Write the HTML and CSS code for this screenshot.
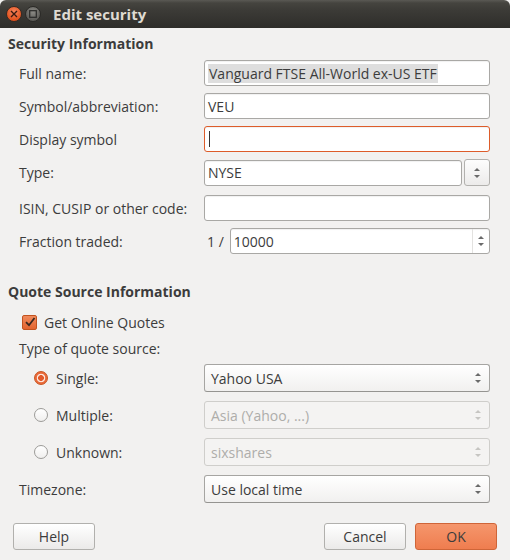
FILE: index.html
```html
<!DOCTYPE html>
<html>
<head>
<meta charset="utf-8">
<link rel="stylesheet" href="styles.css">
</head>
<body>
<div class="window">
  <div class="titlebar">
    <span class="wbtn close"><svg width="8" height="8" viewBox="0 0 8 8"><path d="M1 1L7 7M7 1L1 7" stroke="#3a1a10" stroke-width="1.4"/></svg></span>
    <span class="wbtn max"><svg width="8" height="8" viewBox="0 0 8 8"><rect x="0.7" y="0.7" width="6.6" height="6.6" fill="none" stroke="#2a2a28" stroke-width="1.2"/></svg></span>
    <span class="title">Edit security</span>
  </div>
  <div class="content">
    <div class="section-title">Security Information</div>
    <div class="form">
      <label class="lbl">Full name:</label>
      <div class="entry"><span class="sel">Vanguard FTSE All-World ex-US ETF</span></div>
      <label class="lbl">Symbol/abbreviation:</label>
      <div class="entry">VEU</div>
      <label class="lbl">Display symbol</label>
      <div class="entry focus"><span class="caret"></span></div>
      <label class="lbl">Type:</label>
      <div class="typerow">
        <div class="entry grow">NYSE</div>
        <div class="spinbtn"><span class="arrows"><i class="up"></i><i class="down"></i></span></div>
      </div>
      <label class="lbl r5">ISIN, CUSIP or other code:</label>
      <div class="entry r5"></div>
      <label class="lbl">Fraction traded:</label>
      <div class="fracrow">
        <span class="frac">1 /</span>
        <div class="entry grow spin">10000<span class="arrows"><i class="up"></i><i class="down"></i></span></div>
      </div>
    </div>

    <div class="section-title second">Quote Source Information</div>
    <div class="check-row"><span class="checkbox"><svg width="12" height="12" viewBox="0 0 12 12"><path d="M2 6.2L5 9.2L10.5 2" fill="none" stroke="#3a2820" stroke-width="1.8"/></svg></span>Get Online Quotes</div>
    <div class="plain-lbl">Type of quote source:</div>
    <div class="qform">
      <label class="radio-lbl"><span class="radio on"><i></i></span>Single:</label>
      <div class="combo">Yahoo USA<span class="arrows"><i class="up"></i><i class="down"></i></span></div>
      <label class="radio-lbl"><span class="radio"></span>Multiple:</label>
      <div class="combo disabled">Asia (Yahoo, ...)<span class="arrows"><i class="up"></i><i class="down"></i></span></div>
      <label class="radio-lbl"><span class="radio"></span>Unknown:</label>
      <div class="combo disabled">sixshares<span class="arrows"><i class="up"></i><i class="down"></i></span></div>
      <label class="tz-lbl">Timezone:</label>
      <div class="combo">Use local time<span class="arrows"><i class="up"></i><i class="down"></i></span></div>
    </div>
    <div class="buttons">
      <button class="btn">Help</button>
      <span class="spacer"></span>
      <button class="btn">Cancel</button>
      <button class="btn ok">OK</button>
    </div>
  </div>
</div>
</body>
</html>
```
FILE: styles.css
```css
* { box-sizing: border-box; }
html, body { margin: 0; padding: 0; }
body {
  width: 510px; height: 560px; overflow: hidden;
  background: #f2f1f0;
  font-family: "Open Sans", "Noto Sans", sans-serif;
  font-size: 14px;
  color: #3c3c3c;
}
.window { width: 510px; height: 560px; }
.titlebar {
  height: 28px;
  background: linear-gradient(#5a5954 0px, #45443f 3px, #3c3b37 10px, #2e2d2a 28px);
  border-radius: 6px 6px 0 0;
  display: flex; align-items: center;
  padding-left: 6px;
}
.wbtn {
  width: 16px; height: 16px; border-radius: 50%;
  display: flex; align-items: center; justify-content: center;
  margin-right: 3px;
}
.wbtn.close {
  background: radial-gradient(circle at 50% 35%, #f8845c, #e3531f 70%);
  border: 1px solid #3a2a22;
}
.wbtn.max {
  width: 16px; height: 16px;
  background: radial-gradient(circle at 50% 35%, #8c8b86, #5d5c58 70%);
  border: 1px solid #2b2a27;
}
.title {
  color: #dfdbd2; font-weight: bold; font-size: 15px;
  margin-left: 9px;
}
.content { padding: 7px 20px 0 8px; }
.section-title { font-weight: bold; height: 18px; line-height: 18px; font-size: 14px; }
.section-title.second { margin-top: 29px; }
.form {
  display: grid;
  grid-template-columns: 185px 1fr;
  row-gap: 7px;
  margin-top: 7px;
  padding-left: 11px;
}
.lbl { display: flex; align-items: center; height: 26px; }
.r5 { margin-top: 2px; }
.entry {
  height: 26px;
  border: 1px solid #a9a8a5;
  border-radius: 3px;
  background: #fff;
  box-shadow: inset 0 1px 1px rgba(0,0,0,0.06);
  display: flex; align-items: center;
  padding-left: 3px;
  position: relative;
}
.entry .sel { background: #dedede; padding: 0 1px; }
.entry.focus { border-color: #dd5c2a; }
.caret { width: 1px; height: 16px; background: #333; margin-left: 1px; }
.typerow, .fracrow { display: flex; align-items: center; gap: 2px; }
.grow { flex: 1; }
.spinbtn {
  width: 26px; height: 27px;
  border: 1px solid #b2b1ae; border-radius: 3px;
  background: linear-gradient(#fdfdfd, #ecebea);
  display: flex; align-items: center; justify-content: center;
}
.arrows { display: flex; flex-direction: column; align-items: center; gap: 4px; }
.arrows i { width: 0; height: 0; border-left: 3px solid transparent; border-right: 3px solid transparent; }
.arrows i.up { border-bottom: 3px solid #6a6a6a; }
.arrows i.down { border-top: 3px solid #6a6a6a; }
.frac { margin-left: 3px; margin-right: 4px; }
.entry.spin { padding-right: 0; }
.entry.spin .arrows {
  position: absolute; right: 0; top: 0; bottom: 0; width: 17px;
  justify-content: center;
  border-left: 1px solid #e3e2e0;
}
.check-row { display: flex; align-items: center; margin-top: 12px; padding-left: 14px; height: 18px; }
.checkbox {
  width: 15px; height: 15px; border-radius: 2px;
  background: linear-gradient(#f08a5c, #e3642f);
  border: 1px solid #c2531f;
  display: flex; align-items: center; justify-content: center;
  margin-right: 7px;
}
.plain-lbl { padding-left: 11px; margin-top: 9px; height: 18px; line-height: 18px; }
.qform {
  display: grid;
  grid-template-columns: 185px 1fr;
  row-gap: 9px;
  margin-top: 6px;
  padding-left: 11px;
}
.radio-lbl { display: flex; align-items: center; padding-left: 15px; height: 28px; }
.tz-lbl { display: flex; align-items: center; height: 28px; }
.radio {
  width: 14px; height: 14px; border-radius: 50%;
  border: 1px solid #9c9b98;
  background: linear-gradient(#ffffff, #f0efee);
  margin-right: 8px;
  display: flex; align-items: center; justify-content: center;
}
.radio.on {
  background: radial-gradient(circle, #e2592a 0 2.6px, #fbe6dc 3.2px 4px, #ea6a3a 4.6px);
  border-color: #c8541f;
}
.combo {
  height: 28px;
  border: 1px solid #a6a5a2;
  border-bottom-color: #959491;
  border-radius: 3px;
  background: linear-gradient(#ffffff, #f1f0ef);
  display: flex; align-items: center; justify-content: space-between;
  padding: 0 6px 0 6px;
}
.combo .arrows { margin-right: 2px; }
.combo.disabled {
  color: #aeadaa;
  background: #f4f3f2;
  border-color: #cfcecb;
}
.combo.disabled .arrows i.up { border-bottom-color: #c6c5c2; }
.combo.disabled .arrows i.down { border-top-color: #c6c5c2; }
.buttons { display: flex; gap: 9px; margin-top: 20px; padding-left: 5px; margin-right: -7px; }
.spacer { flex: 1; }
.btn {
  width: 82px; height: 27px;
  font-family: inherit; font-size: 14px; color: #3c3c3c;
  border: 1px solid #b1b0ad; border-radius: 3px;
  background: linear-gradient(#ffffff, #ebeae9);
  padding: 0;
}
.btn.ok {
  background: linear-gradient(#f5966c, #ef7d4f);
  border-color: #cf6538;
}
```
